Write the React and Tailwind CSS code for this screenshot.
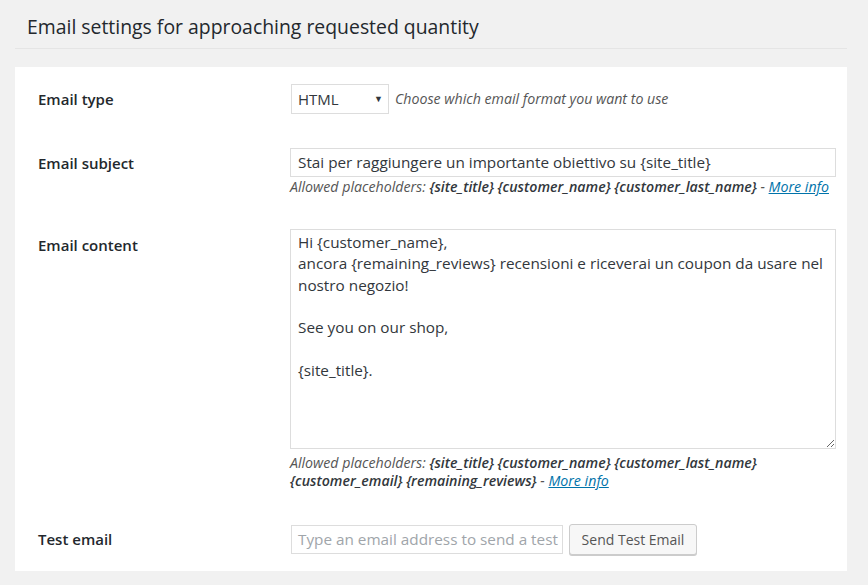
export default function App() {
  const helper = "text-[14.2px] leading-[18px] italic text-[#555]";
  const ph = "font-semibold text-[#32373c]";

  return (
    <div className="min-h-[585px] w-[868px] bg-[#f1f1f1] font-['Open_Sans',sans-serif] text-[#23282d]">
      <div className="ml-[15px] mr-[21px] border-b border-[#e5e5e5] pl-[12px] pt-[13px] pb-[8px]">
        <h2 className="text-[19.4px] leading-[27px] font-normal">Email settings for approaching requested quantity</h2>
      </div>

      <div className="mt-[18px] ml-[15px] mr-[21px] bg-white pl-[23px] pr-[11px] pt-[17px] pb-[16px]">
        {/* email type */}
        <div className="flex">
          <div className="w-[252px] shrink-0 pt-[5px] text-[15px] leading-[20px] font-semibold text-[#23282d]">Email type</div>
          <div className="flex items-center">
            <div className="ml-[1px] flex h-[30px] w-[98px] items-center justify-between border border-[#ddd] bg-white pl-[6px] pr-[5px] text-[15px] text-[#32373c]">
              <span>HTML</span>
              <span className="text-[9px]">▼</span>
            </div>
            <span className={helper + " ml-[6px]"}>Choose which email format you want to use</span>
          </div>
        </div>

        {/* subject */}
        <div className="mt-[34px] flex">
          <div className="w-[252px] shrink-0 pt-[5px] text-[15px] leading-[20px] font-semibold">Email subject</div>
          <div className="flex-1">
            <div className="flex h-[29px] items-center border border-[#ddd] px-[7px] text-[15.3px] text-[#32373c]">
              Stai per raggiungere un importante obiettivo su {"{site_title}"}
            </div>
            <p className={helper + " mt-[1px]"}>
              Allowed placeholders: <span className={ph}>{"{site_title}"} {"{customer_name}"} {"{customer_last_name}"}</span> -{" "}
              <a className="text-[#0073aa] underline">More info</a>
            </p>
          </div>
        </div>

        {/* content */}
        <div className="mt-[33px] flex">
          <div className="w-[252px] shrink-0 pt-[6px] text-[15px] leading-[20px] font-semibold">Email content</div>
          <div className="flex-1">
            <textarea
              readOnly
              className="block h-[220px] w-full resize-y border border-[#ddd] px-[7px] py-[2px] text-[15.3px] leading-[21.3px] text-[#32373c] outline-none"
              defaultValue={"Hi {customer_name},\nancora {remaining_reviews} recensioni e riceverai un coupon da usare nel nostro negozio!\n\nSee you on our shop,\n\n{site_title}."}
            />
            <p className={helper + " mt-[5px]"}>
              Allowed placeholders: <span className={ph}>{"{site_title}"} {"{customer_name}"} {"{customer_last_name}"}</span>
              <br />
              <span className={ph}>{"{customer_email}"} {"{remaining_reviews}"}</span> -{" "}
              <a className="text-[#0073aa] underline">More info</a>
            </p>
          </div>
        </div>

        {/* test email */}
        <div className="mt-[34px] flex">
          <div className="w-[252px] shrink-0 pt-[5px] text-[15px] leading-[20px] font-semibold">Test email</div>
          <div className="flex items-center">
            <div className="ml-[1px] flex h-[29px] w-[272px] items-center overflow-hidden whitespace-nowrap border border-[#ddd] px-[6px] text-[15.3px] text-[#a0a5aa]">
              Type an email address to send a test
            </div>
            <button className="ml-[6px] h-[31px] w-[128px] rounded-[3px] border border-[#ccc] bg-[#f7f7f7] text-[14px] text-[#555] shadow-[0_1px_0_#ccc]">
              Send Test Email
            </button>
          </div>
        </div>
      </div>
    </div>
  );
}
